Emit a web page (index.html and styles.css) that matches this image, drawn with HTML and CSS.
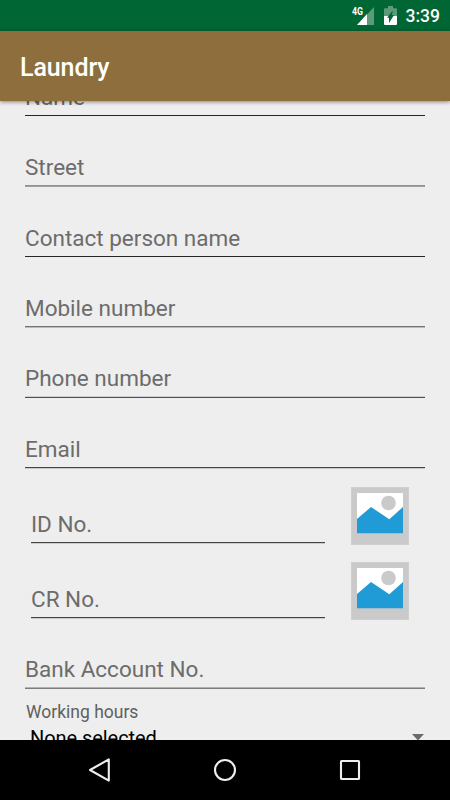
FILE: index.html
```html
<!DOCTYPE html>
<html lang="en">
<head>
<meta charset="utf-8">
<title>Laundry</title>
<link rel="stylesheet" href="styles.css">
</head>
<body>
<div class="screen">
  <header class="status">
    <svg class="signal" width="24" height="20" viewBox="0 0 24 20">
      <path d="M22 2V20H5z" fill="#5c9a7c"/>
      <path d="M15 9V20H5z" fill="#fff"/>
      <text x="0" y="10" class="network" textLength="11" lengthAdjust="spacingAndGlyphs">4G</text>
    </svg>
    <svg class="battery" width="13" height="19" viewBox="0 0 13 19">
      <path d="M1 2.3H4V0H9V2.3H12Q13 2.3 13 3.3V10H0V3.3Q0 2.3 1 2.3z" fill="#5c9a7c"/>
      <path d="M0 10H13V18Q13 19 12 19H1Q0 19 0 18z" fill="#fff"/>
      <path d="M8.8 4.5L8 9H10L5 17V11.8H3z" fill="#006633"/>
    </svg>
    <span class="clock">3:39</span>
  </header>
  <div class="toolbar"><h1>Laundry</h1></div>
  <main class="form">
    <div class="field first line-sharp"><label>Name</label></div>
    <div class="field line-even"><label>Street</label></div>
    <div class="field tall line-sharp"><label>Contact person name</label></div>
    <div class="field line-upper"><label>Mobile number</label></div>
    <div class="field line-lower"><label>Phone number</label></div>
    <div class="field tall line-dark"><label>Email</label></div>
    <div class="row">
      <div class="field inset line-dark"><label>ID No.</label></div>
      <svg class="photo" width="58" height="58" viewBox="0 0 58 58">
        <path d="M0 0H58V58H0z" fill="#cecece"/><path d="M1 1H57V57H1z" fill="#cacaca"/>
        <path d="M6 6H52V46H6z" fill="#fff"/>
        <circle cx="37.5" cy="16" r="7.3" fill="#cacaca"/>
        <path d="M6 32L20 20L38.3 32.2L52 20V46.3H6z" fill="#219bd5"/>
      </svg>
    </div>
    <div class="row">
      <div class="field inset line-dark"><label>CR No.</label></div>
      <svg class="photo" width="58" height="58" viewBox="0 0 58 58">
        <path d="M0 0H58V58H0z" fill="#cecece"/><path d="M1 1H57V57H1z" fill="#cacaca"/>
        <path d="M6 6H52V46H6z" fill="#fff"/>
        <circle cx="37.5" cy="16" r="7.3" fill="#cacaca"/>
        <path d="M6 32L20 20L38.3 32.2L52 20V46.3H6z" fill="#219bd5"/>
      </svg>
    </div>
    <div class="field line-bank"><label>Bank Account No.</label></div>
    <div class="hours">Working hours</div>
    <div class="select"><span>None selected</span>
      <svg width="12" height="7" viewBox="0 0 12 7"><path d="M0 0H12L6 6.5z" fill="#6b6b6b"/></svg>
    </div>
  </main>
  <nav class="nav">
    <svg width="24" height="26" viewBox="0 0 24 26"><path d="M20.8 2.4V23.6L2 13z"/></svg>
    <svg width="24" height="26" viewBox="0 0 24 26"><circle cx="12" cy="13" r="10"/></svg>
    <svg width="24" height="26" viewBox="0 0 24 26"><rect x="3" y="4" width="18" height="18" rx=".5"/></svg>
  </nav>
</div>
</body>
</html>
```
FILE: styles.css
```css
*, *::after { box-sizing: border-box; }
body { margin: 0; font-family: Roboto, "Liberation Sans", sans-serif; }
.screen { width: 450px; height: 800px; display: flex; flex-direction: column; overflow: hidden; background: #eee; }
.status { flex: none; height: 31px; background: #063; display: flex; justify-content: flex-end; align-items: flex-start; padding: 6px 10px 0 0; color: #fff; }
.signal { margin-right: 8px; margin-top: -1px; }
.network { font-size: 10.5px; font-weight: 700; fill: #fff; }
.battery { margin-right: 9px; }
.clock { font-size: 17.5px; font-weight: 500; line-height: 21px; }
.toolbar { flex: none; height: 70px; background: #8f6e3e; padding-left: 20px; display: flex; align-items: center; position: relative; box-shadow: 0 1px 4px rgba(0,0,0,.45); }
h1 { margin: 4px 0 0; font-size: 25px; letter-spacing: -.1px; line-height: 30px; font-weight: 500; color: #fff; }
.form { flex: none; height: 639px; overflow: hidden; padding: 0 25px; display: flex; flex-direction: column; }
.field { flex: none; height: 70px; display: flex; flex-direction: column; justify-content: flex-end; color: #6c6c6c; font-size: 22.5px; line-height: 26px; }
.field::after { content: ""; flex: none; height: 2px; border-top: 1px solid; border-bottom: 1px solid; margin-top: 5px; }
.first { height: 16px; }
.tall { height: 71px; }
.line-sharp::after { border-top-color: #262626; border-bottom-color: #eee; }
.line-even::after { border-top-color: #929292; border-bottom-color: #a0a0a0; }
.line-upper::after { border-top-color: #747474; border-bottom-color: #bababa; }
.line-lower::after { border-top-color: #cfcfcf; border-bottom-color: #505050; }
.line-dark::after { border-top-color: #454545; border-bottom-color: #cacaca; }
.line-bank::after { border-top-color: #b2b2b2; border-bottom-color: #7c7c7c; }
.row { flex: none; height: 75px; display: flex; align-items: flex-end; }
.inset { width: 294px; margin-left: 6px; }
.photo { margin: 0 0 -1px 26px; }
.hours { flex: none; margin: 13px 0 0 1px; font-size: 17.5px; line-height: 21px; color: #606060; }
.select { flex: none; height: 30px; padding: 3px 1px 0 5px; display: flex; justify-content: space-between; font-size: 20px; letter-spacing: -.06px; line-height: 24px; color: #000; }
.select svg { margin-top: 8px; }
.nav { flex: none; height: 60px; background: #000; display: flex; justify-content: center; align-items: center; gap: 101px; }
.nav svg { fill: none; stroke: #eee; stroke-width: 2.1; stroke-linejoin: round; }
```
